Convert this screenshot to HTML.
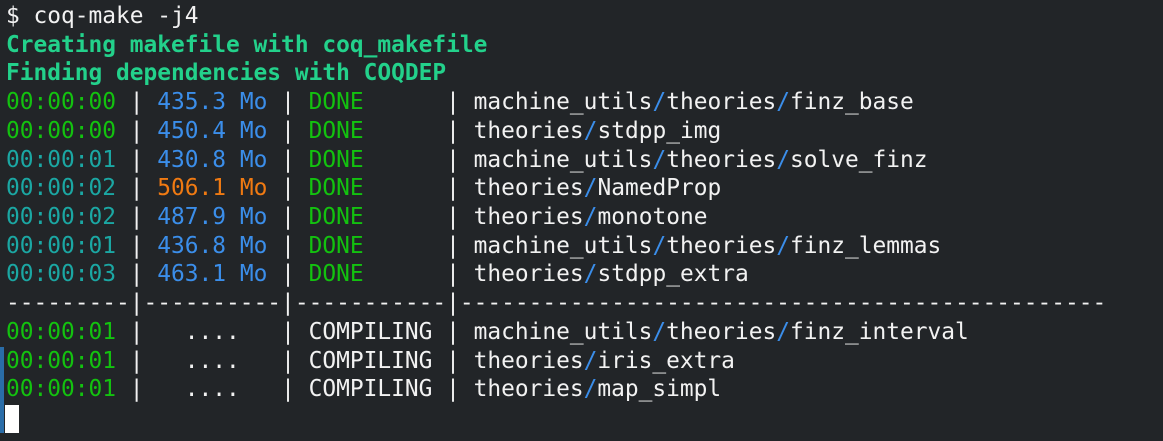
<!DOCTYPE html>
<html><head><style>
html,body{margin:0;padding:0;background:#222528;width:1163px;height:441px;overflow:hidden}
pre{margin:0;position:absolute;left:6px;top:2px;font-family:"DejaVu Sans Mono","Liberation Mono",monospace;font-size:22.85px;line-height:28.72px;color:#f2f2f2}
.b{color:#23d18b;font-weight:bold}.g{color:#13c20f}.t{color:#1ba7a3}.u{color:#3b8eea}.o{color:#f07a12}.d{color:#13c20f}
.bar{position:absolute;left:0;top:347px;width:4px;height:86px;background:#2a6da8}
.cur{position:absolute;left:5px;top:405px;width:14px;height:28px;background:#fff}
</style></head><body>
<pre>$ coq-make -j4
<span class="b">Creating makefile with coq_makefile</span>
<span class="b">Finding dependencies with COQDEP</span>
<span class="g">00:00:00</span> | <span class="u">435.3 Mo</span> | <span class="d">DONE</span>      | machine_utils<span class="u">/</span>theories<span class="u">/</span>finz_base
<span class="g">00:00:00</span> | <span class="u">450.4 Mo</span> | <span class="d">DONE</span>      | theories<span class="u">/</span>stdpp_img
<span class="t">00:00:01</span> | <span class="u">430.8 Mo</span> | <span class="d">DONE</span>      | machine_utils<span class="u">/</span>theories<span class="u">/</span>solve_finz
<span class="t">00:00:02</span> | <span class="o">506.1 Mo</span> | <span class="d">DONE</span>      | theories<span class="u">/</span>NamedProp
<span class="t">00:00:02</span> | <span class="u">487.9 Mo</span> | <span class="d">DONE</span>      | theories<span class="u">/</span>monotone
<span class="t">00:00:01</span> | <span class="u">436.8 Mo</span> | <span class="d">DONE</span>      | machine_utils<span class="u">/</span>theories<span class="u">/</span>finz_lemmas
<span class="t">00:00:03</span> | <span class="u">463.1 Mo</span> | <span class="d">DONE</span>      | theories<span class="u">/</span>stdpp_extra
---------|----------|-----------|-----------------------------------------------
<span class="g">00:00:01</span> |   ....   | COMPILING | machine_utils<span class="u">/</span>theories<span class="u">/</span>finz_interval
<span class="g">00:00:01</span> |   ....   | COMPILING | theories<span class="u">/</span>iris_extra
<span class="g">00:00:01</span> |   ....   | COMPILING | theories<span class="u">/</span>map_simpl
</pre>
<div class="bar"></div><div class="cur"></div>
</body></html>
